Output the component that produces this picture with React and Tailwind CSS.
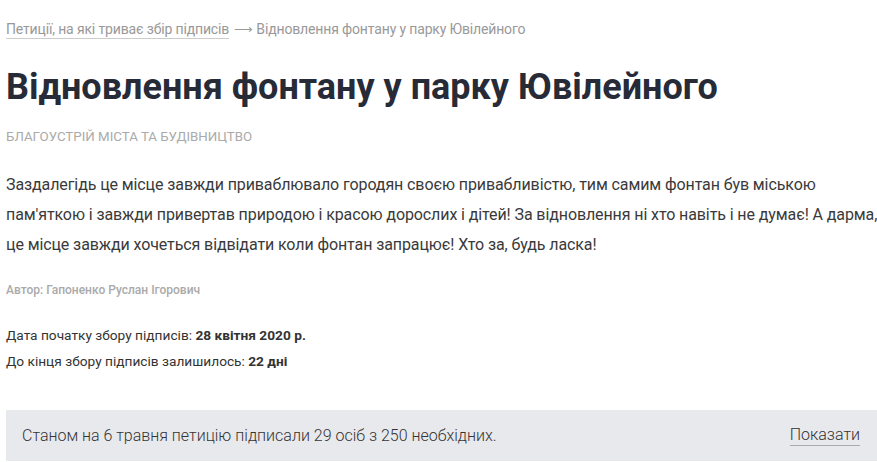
export default function App() {
  return (
    <div className="min-h-[462px] overflow-hidden bg-white px-[6px] font-['Roboto',sans-serif] text-[#333]">
      <nav className="pt-[19px] text-[14px] leading-5 tracking-[-0.15px] text-[#999]">
        <a className="border-b border-[#ccc] pb-[1px]">Петиції, на які триває збір підписів</a>
        <span className="ml-[5px]">
          <span className="text-[12.5px]">⟶</span> Відновлення фонтану у парку Ювілейного
        </span>
      </nav>

      <h1 className="mt-[27px] text-[36px] font-bold leading-[40px] text-[#272b38]">
        Відновлення фонтану у парку Ювілейного
      </h1>

      <div className="mt-[20px] text-[13.3px] uppercase leading-5 text-[#aaa]">
        Благоустрій міста та будівництво
      </div>

      <p className="mt-[23px] whitespace-nowrap text-[16px] leading-[30px] tracking-[-0.1px] text-[#3a3a3a]">
        Заздалегідь це місце завжди приваблювало городян своєю привабливістю, тим самим фонтан був міською
        <br />
        пам'яткою і завжди привертав природою і красою дорослих і дітей! За відновлення ні хто навіть і не думає! А дарма,
        <br />
        це місце завжди хочеться відвідати коли фонтан запрацює! Хто за, будь ласка!
      </p>

      <div className="mt-[22px] text-[12px] font-medium leading-4 text-[#aaa]">
        Автор: Гапоненко Руслан Ігорович
      </div>

      <div className="mt-[24px] text-[13.7px] leading-[26px] text-[#333]">
        <div>
          Дата початку збору підписів: <b className="font-bold">28 квітня 2020 р.</b>
        </div>
        <div>
          До кінця збору підписів залишилось: <b className="font-bold">22 дні</b>
        </div>
      </div>

      <div className="-mr-[6px] mt-[36px] flex h-[51px] items-center justify-between bg-[#e8e9ed] pl-[16px] pr-[17px] text-[16px] font-light text-[#333]">
        <span>Станом на 6 травня петицію підписали 29 осіб з 250 необхідних.</span>
        <a className="border-b border-[#aaa] leading-5">Показати</a>
      </div>
    </div>
  );
}
